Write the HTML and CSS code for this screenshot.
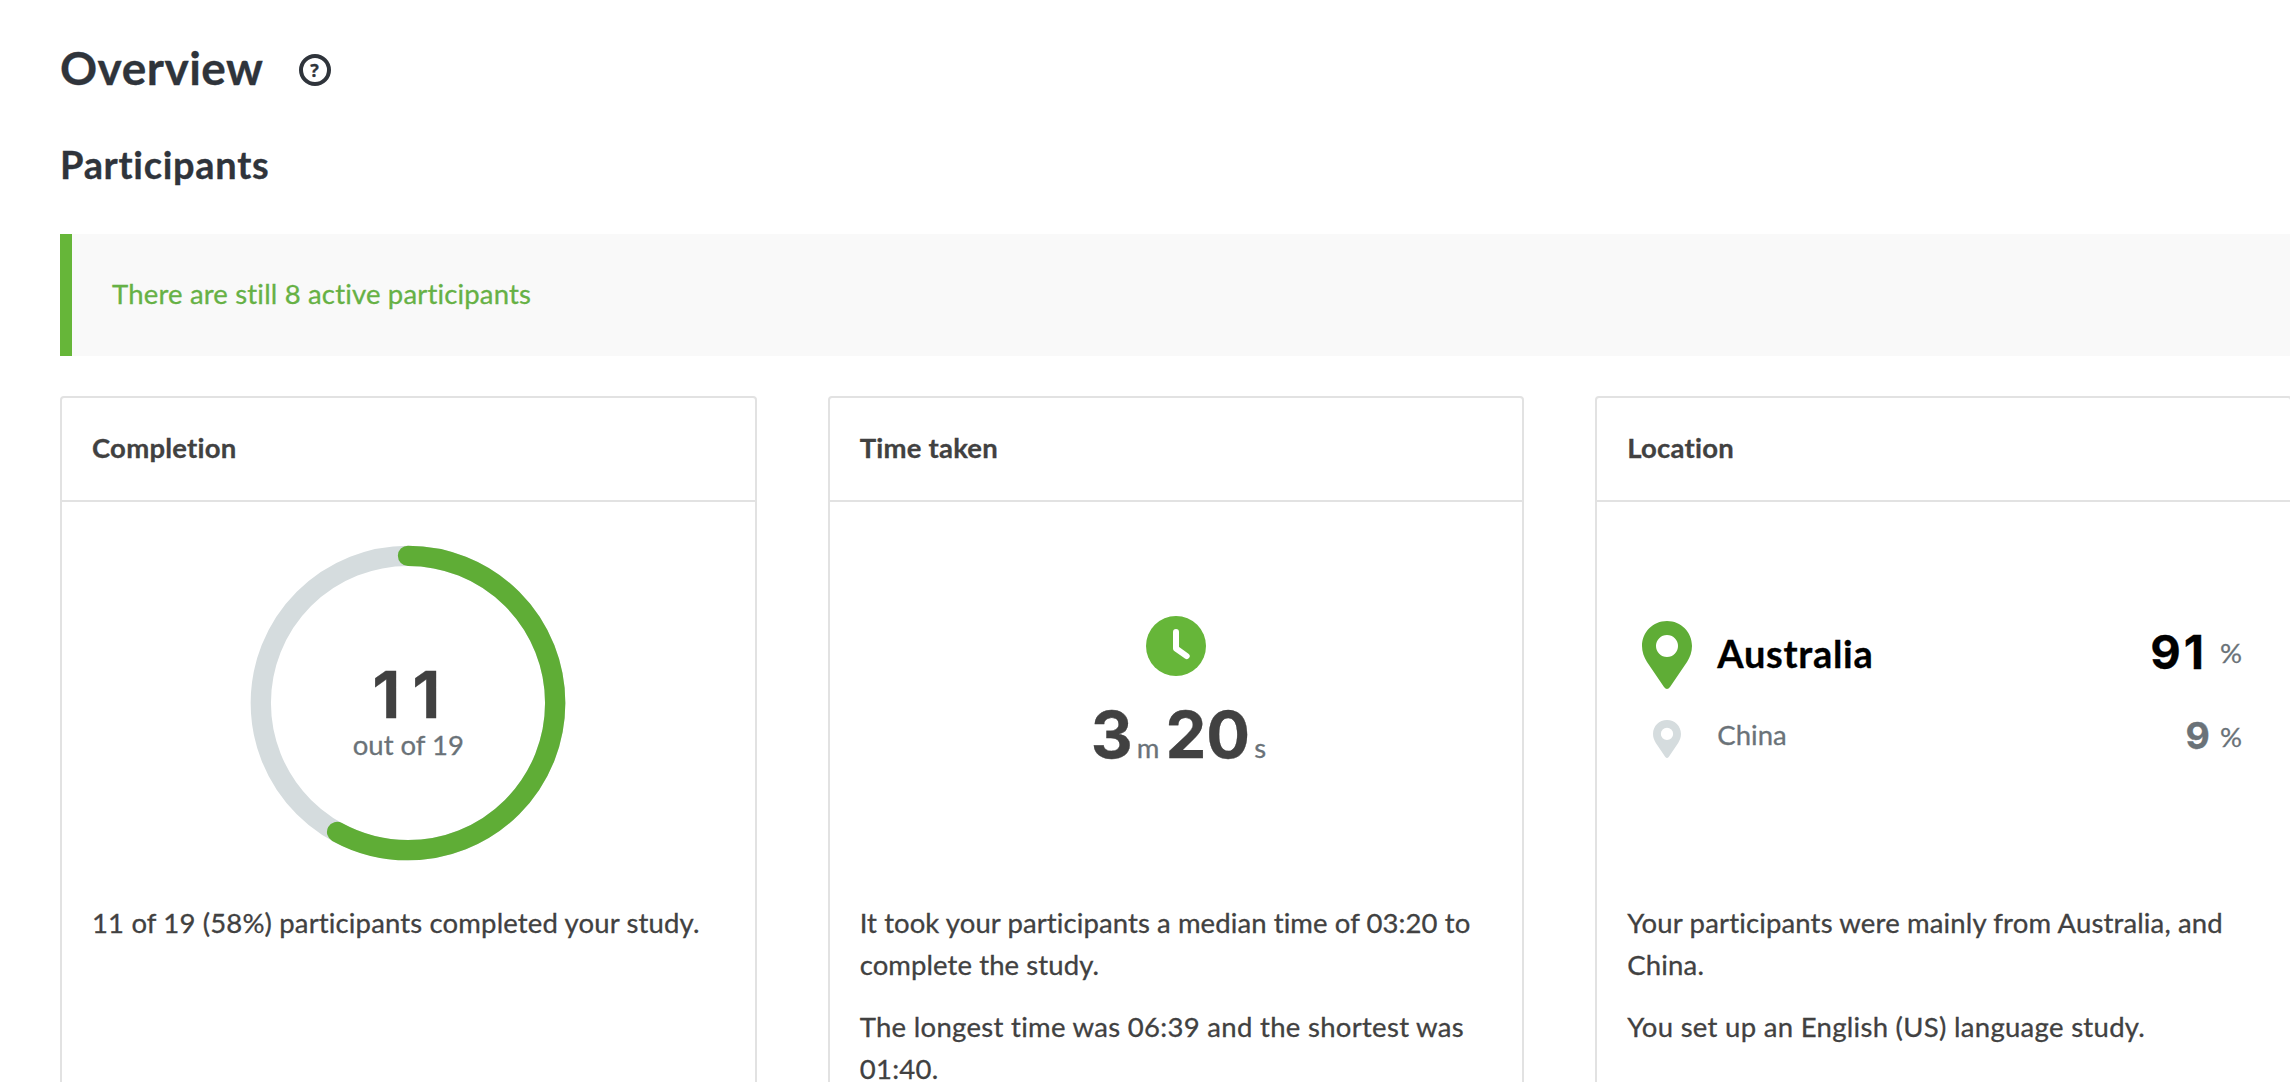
FILE: index.html
```html
<!DOCTYPE html>
<html lang="en">
<head>
<meta charset="utf-8">
<title>Overview</title>
<link rel="stylesheet" href="styles.css">
</head>
<body>
<main class="page">
  <header class="page-head">
    <h1 class="title">Overview</h1>
    <span class="help">?</span>
  </header>
  <h2 class="subtitle">Participants</h2>
  <div class="notice">There are still 8 active participants</div>
  <section class="cards">
    <article class="card">
      <h3 class="card-title">Completion</h3>
      <div class="figure donut-figure">
        <svg class="donut" viewBox="0 0 316 316">
          <circle class="track" cx="158" cy="158" r="147.2"/>
          <circle class="value" cx="158" cy="158" r="147.2" pathLength="100" stroke-dasharray="58 100" transform="rotate(-90 158 158)"/>
        </svg>
        <div class="donut-label">
          <div class="big eleven">11</div>
          <div class="unit outof">out of 19</div>
        </div>
      </div>
      <div class="copy completion-copy">
        <p>11 of 19 (58%) participants completed your study.</p>
      </div>
    </article>
    <article class="card">
      <h3 class="card-title">Time taken</h3>
      <div class="figure time-figure">
        <svg class="clock" viewBox="0 0 60 60">
          <circle cx="30" cy="30" r="30"/>
          <path d="M30 16v16.5l10.7 7.6"/>
        </svg>
        <div class="time"><span class="big">3</span><span class="unit min">m</span><span class="big">20</span><span class="unit sec">s</span></div>
      </div>
      <div class="copy time-copy">
        <p>It took your participants a median time of 03:20 to<br>complete the study.</p>
        <p class="loose">The longest time was 06:39 and the shortest was<br>01:40.</p>
      </div>
    </article>
    <article class="card">
      <h3 class="card-title">Location</h3>
      <div class="figure places">
        <div class="place main-place">
          <svg class="pin" viewBox="0 0 50 68"><path fill-rule="evenodd" d="M25 0C11 0 0 11 0 25c0 6 2 11 5 16l17 25q3 4 6 0l17-25c3-5 5-10 5-16C50 11 39 0 25 0zm0 14a11 11 0 1 1 0 22a11 11 0 1 1 0-22z"/></svg>
          <span class="name">Australia</span>
          <span class="num">91</span><span class="pct">%</span>
        </div>
        <div class="place other-place">
          <svg class="pin" viewBox="0 0 50 68"><path fill-rule="evenodd" d="M25 0C11 0 0 11 0 25c0 6 2 11 5 16l17 25q3 4 6 0l17-25c3-5 5-10 5-16C50 11 39 0 25 0zm0 14a11 11 0 1 1 0 22a11 11 0 1 1 0-22z"/></svg>
          <span class="name">China</span>
          <span class="num">9</span><span class="pct">%</span>
        </div>
      </div>
      <div class="copy location-copy">
        <p>Your participants were mainly from Australia, and<br>China.</p>
        <p class="loose">You set up an English (US) language study.</p>
      </div>
    </article>
  </section>
</main>
</body>
</html>
```

FILE: styles.css
```css
* { box-sizing: border-box; }
body { margin: 0; background: #fff; color: #414141; font: 27.5px/42px Lato, sans-serif; font-variant-ligatures: none; -webkit-text-stroke: 0.3px currentColor; }
h1, h2, h3, p { margin: 0; }
.page { width: 100%; height: 1082px; overflow: hidden; padding: 36px 0 0 60px; }
.page-head { display: flex; align-items: center; height: 64px; gap: 35px; color: #2f343b; }
.title { font-size: 46px; line-height: 60px; font-weight: 700; letter-spacing: 0.5px; margin-bottom: 1px; }
.help { width: 32px; height: 32px; border: 4px solid #2f343b; border-radius: 50%; font: 700 18px/24px "Open Sans", sans-serif; text-align: center; margin-top: 4px; }
.subtitle { margin-top: 40px; font-size: 38px; line-height: 48px; font-weight: 700; letter-spacing: 0.7px; color: #2f343b; }
.notice { margin-top: 46px; height: 122px; border-left: 12px solid #66b639; background: #f9f9f9; padding: 38px 0 0 40px; line-height: 44px; letter-spacing: 0.17px; color: #66b145; }
.cards { margin-top: 40px; display: grid; grid-template-columns: repeat(3, 696.67px); gap: 71px; }
.card { height: 760px; border: 2px solid #e2e2e2; border-radius: 4px; }
.card-title { height: 104px; border-bottom: 2px solid #e2e2e2; padding: 28px 30px 0; font-size: 27.5px; line-height: 44px; font-weight: 700; letter-spacing: 0.22px; }
.figure { height: 400px; }
.copy { padding: 0 30px; display: flex; flex-direction: column; gap: 20px; white-space: nowrap; }
.completion-copy, .location-copy { letter-spacing: 0.15px; }
.time-copy { letter-spacing: 0.09px; }
.copy .loose { letter-spacing: 0.3px; }
.big { font: 700 65px/67px Inter, sans-serif; color: #414141; }
.unit { color: #6a7278; }

.donut-figure { display: grid; justify-items: center; align-items: start; padding-top: 43px; }
.donut, .donut-label { grid-area: 1 / 1; }
.donut { width: 316px; height: 316px; }
.donut circle { fill: none; stroke-width: 20.3; }
.donut .track { stroke: #d5dcde; }
.donut .value { stroke: #5fad36; stroke-linecap: round; }
.donut-label { padding-top: 120px; text-align: center; }
.eleven { line-height: 60px; letter-spacing: 12px; padding-left: 8px; }
.outof { line-height: 40px; }

.time-figure { display: flex; flex-direction: column; align-items: center; padding-top: 114px; }
.clock { width: 60px; height: 60px; fill: #66b639; }
.clock path { fill: none; stroke: #fff; stroke-width: 6; stroke-linecap: round; stroke-linejoin: round; }
.time { display: flex; align-items: baseline; margin-top: 25px; padding-left: 5px; }
.min { margin: 0 6px 0 4px; }
.sec { margin-left: 4px; }

.places { padding: 119px 48px 0 45px; }
.place { display: grid; grid-template-columns: 50px 1fr auto 22px; align-items: start; }
.pin { justify-self: center; }
.name { padding-left: 25px; }
.num { font-family: Inter, sans-serif; font-weight: 700; }
.pct { margin-top: 2px; color: #6a7278; }
.main-place { height: 93px; color: #000; line-height: 60px; }
.main-place .pin { width: 50px; height: 68px; fill: #5fad36; }
.main-place .name { margin-top: 2px; font-size: 38px; font-weight: 700; letter-spacing: 0.7px; }
.main-place .num { margin-top: 1px; font-size: 47px; letter-spacing: 3px; padding-right: 13px; }
.other-place { color: #6a7278; }
.other-place .pin { width: 28px; height: 38px; margin-top: 6px; fill: #d5dcde; }
.other-place .num { margin-top: 1px; font-size: 37.5px; padding-right: 10px; }
```
